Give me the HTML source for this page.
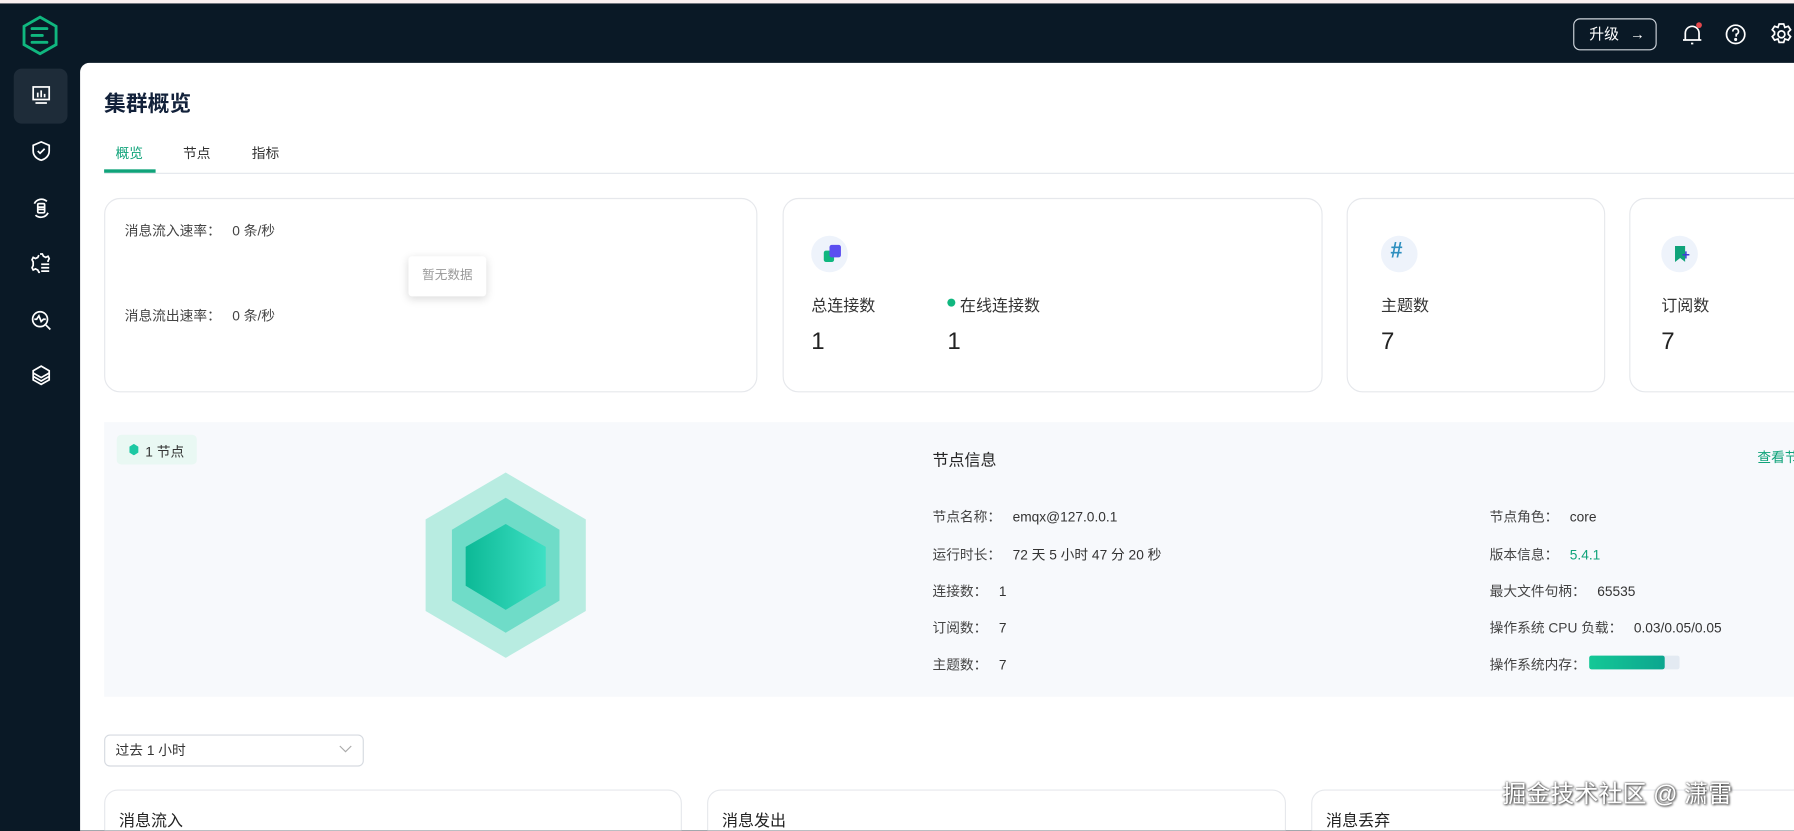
<!DOCTYPE html>
<html><head><meta charset="utf-8">
<style>
*{margin:0;padding:0;box-sizing:border-box}
html,body{width:1794px;height:830px;overflow:hidden;background:#0a1926}
body{font-family:"Liberation Sans","Noto Sans CJK SC",sans-serif;color:#1d1d1d}
#w{position:absolute;left:0;top:0;width:1568px;height:726px;transform:scale(1.14413);transform-origin:0 0;background:#0a1926;overflow:hidden}
.a{position:absolute;white-space:nowrap}
.top{left:0;top:0;width:1568px;height:3px;background:#fbf1f1}
.main{left:70px;top:55px;width:1500px;height:680px;background:#fff;border-top-left-radius:8px}
.card{position:absolute;border:1px solid #e6e8ec;border-radius:14px;background:#fff}
.t12{font-size:12px;color:#333}
.lbl{font-size:14px;color:#333}
.num{font-size:21px;color:#222}
.ic{width:32px;height:32px;border-radius:50%;background:#eef3fb}
.row{position:absolute;font-size:12px;color:#444;white-space:nowrap}
.row b{font-weight:normal;color:#333;margin-left:10px}
</style></head><body><div id="w">
<div class="a top"></div>
<svg class="a" style="left:17px;top:13px" width="36" height="36" viewBox="0 0 36 36"><polygon points="18,2 32,10 32,26 18,34 4,26 4,10" fill="none" stroke="#10b77f" stroke-width="2.5"/><path d="M11 12h13M11 18h9M11 24h13" stroke="#10b77f" stroke-width="2.5" stroke-linecap="round"/></svg>
<div class="a" style="left:12px;top:60px;width:47px;height:48px;background:#1e2c39;border-radius:7px"></div>
<svg class="a" style="left:26px;top:73px" width="20" height="20" viewBox="0 0 20 20" fill="none" stroke="#fff" stroke-width="1.5"><rect x="3" y="3" width="14" height="11"/><path d="M7 12V8M10 12V6M13 12V9M5 17h10"/></svg>
<svg class="a" style="left:26px;top:122px" width="20" height="20" viewBox="0 0 20 20" fill="none" stroke="#fff" stroke-width="1.5"><path d="M10 2l7 3v5c0 4-3 7-7 8-4-1-7-4-7-8V5z"/><path d="M7 10l2 2 4-4"/></svg>
<svg class="a" style="left:26px;top:172px" width="20" height="20" viewBox="0 0 20 20" fill="none" stroke="#fff" stroke-width="1.5"><path d="M4 6a7 7 0 0 1 11-2M16 14a7 7 0 0 1-11 2"/><rect x="7" y="6" width="6" height="8" rx="1"/><path d="M7 9h6M7 11h6"/></svg>
<svg class="a" style="left:26px;top:220px" width="20" height="20" viewBox="0 0 20 20" fill="none" stroke="#fff" stroke-width="1.5"><path d="M9 2h2l1 2 2 1 2-1 1 2-1 2v1M9 18H8l-1-2-2-1-2 1-1-2 1-2V9L2 7l1-2 2 1 2-1 1-2"/><path d="M10 11h7M10 14h7M10 17h7"/></svg>
<svg class="a" style="left:26px;top:270px" width="20" height="20" viewBox="0 0 20 20" fill="none" stroke="#fff" stroke-width="1.5"><circle cx="9" cy="9" r="6.5"/><path d="M4 9h2l2-3 2 5 2-2h2M14 14l4 4"/></svg>
<svg class="a" style="left:26px;top:318px" width="20" height="20" viewBox="0 0 20 20" fill="none" stroke="#fff" stroke-width="1.5"><polygon points="10,2 17,6 17,14 10,18 3,14 3,6"/><path d="M3 8l7 4 7-4M3 11l7 4 7-4"/></svg>
<div class="a" style="left:1375px;top:16px;width:73px;height:28px;border:1px solid #cfd5dc;border-radius:6px;color:#fff;font-size:13px;line-height:26px;padding-left:13px">升级 <span style="margin-left:6px">→</span></div>
<svg class="a" style="left:1468px;top:19px" width="22" height="22" viewBox="0 0 22 22" fill="none" stroke="#fff" stroke-width="1.5"><path d="M5 16V10a6 6 0 0 1 12 0v6M3 16h16M10 19h2"/><circle cx="17" cy="3" r="2.5" fill="#e5484d" stroke="none"/></svg>
<svg class="a" style="left:1507px;top:20px" width="20" height="20" viewBox="0 0 20 20" fill="none" stroke="#fff" stroke-width="1.5"><circle cx="10" cy="10" r="8"/><path d="M7.5 7.5a2.5 2.5 0 1 1 3 2.5v2"/><circle cx="10" cy="14.5" r=".6" fill="#fff"/></svg>
<svg class="a" style="left:1546px;top:19px" width="22" height="22" viewBox="0 0 22 22" fill="none" stroke="#fff" stroke-width="1.5"><path d="M9 2h4l1 3 3-1 2 3-2 2v2l2 2-2 3-3-1-1 3H9l-1-3-3 1-2-3 2-2V9L3 7l2-3 3 1z"/><circle cx="11" cy="11" r="3"/></svg>
<div class="a main"></div>
<div class="a" style="left:91px;top:76px;font-size:19px;font-weight:bold;color:#12213a">集群概览</div>
<div class="a" style="left:101px;top:125px;font-size:12px;color:#10a37a">概览</div>
<div class="a" style="left:160px;top:125px;font-size:12px;color:#333">节点</div>
<div class="a" style="left:220px;top:125px;font-size:12px;color:#333">指标</div>
<div class="a" style="left:91px;top:151px;width:1480px;height:1px;background:#e4e7ec"></div>
<div class="a" style="left:91px;top:148px;width:45px;height:3px;background:#10a37a"></div>
<div class="card" style="left:91px;top:173px;width:571px;height:170px"></div>
<div class="a t12" style="left:109px;top:193px;color:#444">消息流入速率：&nbsp;&nbsp;&nbsp;0 条/秒</div>
<div class="a t12" style="left:109px;top:267px;color:#444">消息流出速率：&nbsp;&nbsp;&nbsp;0 条/秒</div>
<div class="a" style="left:357px;top:224px;width:68px;height:35px;background:#fff;box-shadow:0 2px 8px rgba(0,0,0,.15);border-radius:3px;font-size:11px;color:#999;text-align:center;line-height:35px">暂无数据</div>
<div class="card" style="left:684px;top:173px;width:472px;height:170px"></div>
<div class="a ic" style="left:709px;top:206px"></div>
<div class="a" style="left:720px;top:219px;width:9px;height:10px;background:#10b77f;border-radius:2px"></div>
<div class="a" style="left:725px;top:214px;width:10px;height:11px;background:#5b4ef0;border-radius:2px"></div>
<div class="a lbl" style="left:709px;top:257px">总连接数</div>
<div class="a num" style="left:709px;top:287px">1</div>
<div class="a" style="left:828px;top:261px;width:7px;height:7px;border-radius:50%;background:#10b77f"></div>
<div class="a lbl" style="left:839px;top:257px">在线连接数</div>
<div class="a num" style="left:828px;top:287px">1</div>
<div class="card" style="left:1177px;top:173px;width:226px;height:170px"></div>
<div class="a ic" style="left:1207px;top:206px"></div>
<div class="a" style="left:1215px;top:209px;font-size:19px;font-weight:bold;color:#2e8fbf;font-style:italic">#</div>
<div class="a lbl" style="left:1207px;top:257px">主题数</div>
<div class="a num" style="left:1207px;top:287px">7</div>
<div class="card" style="left:1424px;top:173px;width:200px;height:170px"></div>
<div class="a ic" style="left:1452px;top:206px"></div>
<div class="a" style="left:1464px;top:215px;width:9px;height:14px;background:#10a37a;clip-path:polygon(0 0,100% 0,100% 100%,50% 75%,0 100%)"></div>
<div class="a" style="left:1470px;top:216px;font-size:12px;font-weight:bold;color:#3f3dd4">+</div>
<div class="a lbl" style="left:1452px;top:257px">订阅数</div>
<div class="a num" style="left:1452px;top:287px">7</div>
<div class="a" style="left:91px;top:369px;width:1480px;height:240px;background:#f7f9fc"></div>
<div class="a" style="left:102px;top:380px;width:70px;height:26px;background:#e9f8f3;border-radius:4px"></div>
<div class="a" style="left:113px;top:388px;width:8px;height:10px;background:#1cc8a3;clip-path:polygon(50% 0,100% 25%,100% 75%,50% 100%,0 75%,0 25%)"></div>
<div class="a" style="left:127px;top:386px;font-size:12px;color:#333">1 节点</div>
<svg class="a" style="left:371px;top:413px" width="142" height="162" viewBox="0 0 142 162">
<defs><linearGradient id="g" x1="0" x2="1"><stop offset="0" stop-color="#0cb996"/><stop offset="1" stop-color="#3ee0c4"/></linearGradient></defs>
<polygon points="71,0 141,41 141,121 71,162 1,121 1,41" fill="#b8ece1"/>
<polygon points="71,22 118,50 118,112 71,140 24,112 24,50" fill="#6fdcc8"/>
<polygon points="71,45 106,65 106,99 71,120 36,99 36,65" fill="url(#g)"/>
</svg>
<div class="a" style="left:815px;top:392px;font-size:14px;color:#222">节点信息</div>
<div class="a" style="left:1536px;top:391px;font-size:12px;color:#10a37a">查看节点</div>
<div class="row" style="left:815px;top:443px">节点名称：<b>emqx@127.0.0.1</b></div>
<div class="row" style="left:815px;top:476px">运行时长：<b>72 天 5 小时 47 分 20 秒</b></div>
<div class="row" style="left:815px;top:508px">连接数：<b>1</b></div>
<div class="row" style="left:815px;top:540px">订阅数：<b>7</b></div>
<div class="row" style="left:815px;top:572px">主题数：<b>7</b></div>
<div class="row" style="left:1302px;top:443px">节点角色：<b>core</b></div>
<div class="row" style="left:1302px;top:476px">版本信息：<b style="color:#10a37a">5.4.1</b></div>
<div class="row" style="left:1302px;top:508px">最大文件句柄：<b>65535</b></div>
<div class="row" style="left:1302px;top:540px">操作系统 CPU 负载：<b>0.03/0.05/0.05</b></div>
<div class="row" style="left:1302px;top:572px">操作系统内存：</div>
<div class="a" style="left:1389px;top:573px;width:79px;height:12px;background:#e3eaf2;border-radius:2px"></div>
<div class="a" style="left:1389px;top:573px;width:66px;height:12px;background:linear-gradient(90deg,#14c896,#0ca68f);border-radius:2px"></div>
<div class="a" style="left:91px;top:642px;width:227px;height:28px;border:1px solid #d6dae0;border-radius:5px;font-size:12px;color:#333;line-height:26px;padding-left:9px">过去 1 小时</div>
<svg class="a" style="left:296px;top:651px" width="12" height="8" viewBox="0 0 12 8" fill="none" stroke="#aaa"><path d="M1 1l5 5 5-5"/></svg>
<div class="card" style="left:91px;top:690px;width:505px;height:60px;border-radius:12px"></div>
<div class="card" style="left:618px;top:690px;width:506px;height:60px;border-radius:12px"></div>
<div class="card" style="left:1146px;top:690px;width:480px;height:60px;border-radius:12px"></div>
<div class="a" style="left:104px;top:707px;font-size:14px;color:#222">消息流入</div>
<div class="a" style="left:631px;top:707px;font-size:14px;color:#222">消息发出</div>
<div class="a" style="left:1159px;top:707px;font-size:14px;color:#222">消息丢弃</div>
<div class="a" style="left:1313px;top:678px;font-size:21px;color:#fff;text-shadow:0 0 2px #333,1px 1px 2px #555">掘金技术社区 @ 潇雷</div>
</div></body></html>
